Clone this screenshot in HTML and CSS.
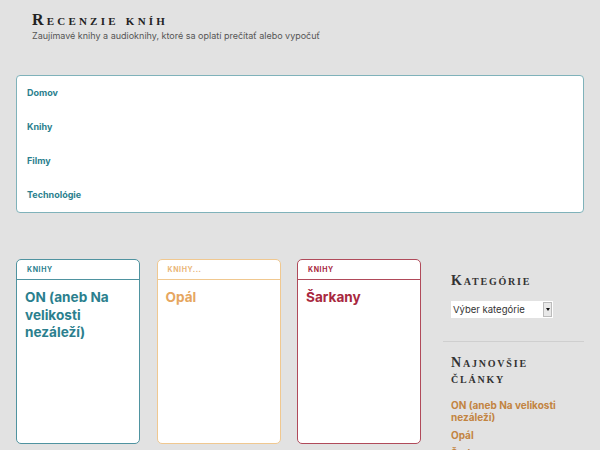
FILE: index.html
```html
<!DOCTYPE html>
<html lang="sk">
<head>
<meta charset="utf-8">
<title>Recenzie kníh</title>
<link rel="stylesheet" href="styles.css">
</head>
<body>
<header class="site-header">
  <h1 class="site-title">Recenzie kníh</h1>
  <p class="site-desc">Zaujímavé knihy a audioknihy, ktoré sa oplatí prečítať alebo vypočuť</p>
</header>
<nav class="menu">
  <a class="menu-item" href="#">Domov</a>
  <a class="menu-item" href="#">Knihy</a>
  <a class="menu-item" href="#">Filmy</a>
  <a class="menu-item" href="#">Technológie</a>
</nav>
<div class="content">
  <main class="cards">
    <article class="card card-teal">
      <div class="card-cat">Knihy</div>
      <h2 class="card-title">ON (aneb Na velikosti nezáleží)</h2>
    </article>
    <article class="card card-orange">
      <div class="card-cat">Knihy...</div>
      <h2 class="card-title">Opál</h2>
    </article>
    <article class="card card-red">
      <div class="card-cat">Knihy</div>
      <h2 class="card-title">Šarkany</h2>
    </article>
  </main>
  <aside class="sidebar">
    <section class="widget widget-cat">
      <h3 class="widget-title">Kategórie</h3>
      <div class="select"><span class="select-text">Výber kategórie</span><span class="select-btn"><span class="arrow"></span></span></div>
    </section>
    <section class="widget widget-recent">
      <h3 class="widget-title">Najnovšie články</h3>
      <ul class="recent">
        <li><a href="#">ON (aneb Na velikosti nezáleží)</a></li>
        <li><a href="#">Opál</a></li>
        <li><a href="#">Šarkany</a></li>
      </ul>
    </section>
  </aside>
</div>
</body>
</html>
```
FILE: styles.css
```css
html, body {
  margin: 0;
  padding: 0;
}
body {
  background: #e2e2e2;
  font-family: Inter, "Open Sans", "Liberation Sans", sans-serif;
  color: #333;
  width: 600px;
  height: 450px;
  overflow: hidden;
}
a { text-decoration: none; }

.site-header {
  padding: 11px 32px 0;
  height: 64px;
  box-sizing: border-box;
}
.site-title {
  margin: 0;
  font-family: "Liberation Serif", "DejaVu Serif", serif;
  font-variant: small-caps;
  font-weight: bold;
  font-size: 16px;
  line-height: 18px;
  letter-spacing: 3.2px;
  color: #222;
}
.site-desc {
  margin: 1px 0 0;
  font-size: 9px;
  line-height: 12px;
  color: #555;
}

.menu {
  margin: 11px 16px 0;
  background: #fff;
  border: 1px solid #7fb2ba;
  border-radius: 4px;
  display: flex;
  flex-direction: column;
  height: 136px;
}
.menu-item {
  height: 34px;
  line-height: 34px;
  padding-left: 10px;
  font-size: 9px;
  font-weight: 700;
  color: #2b7f8e;
}

.content {
  display: flex;
  margin: 46px 16px 0;
  gap: 22px;
}
.cards {
  display: flex;
  gap: 16.5px;
}
.card {
  width: 124px;
  height: 185px;
  box-sizing: border-box;
  background: #fff;
  border: 1px solid;
  border-radius: 5px;
  flex: none;
}
.card-cat {
  height: 19px;
  line-height: 19px;
  padding-left: 10px;
  font-size: 7px;
  font-weight: 700;
  letter-spacing: 0.6px;
  text-transform: uppercase;
  border-bottom: 1px solid;
}
.card-title {
  margin: 9px 0 0;
  padding: 0 8px;
  font-size: 13.6px;
  line-height: 17.5px;
  font-weight: 700;
}
.card-teal { border-color: #4f93a0; }
.card-teal .card-cat { color: #2b7f8e; border-color: #4f93a0; }
.card-teal .card-title { color: #2b7f8e; }
.card-orange { border-color: #f0c890; }
.card-orange .card-cat { color: #eab677; border-color: #f0c890; }
.card-orange .card-title { color: #e6a660; }
.card-red { border-color: #b04a5a; }
.card-red .card-cat { color: #a8283e; border-color: #b04a5a; }
.card-red .card-title { color: #a8283e; }

.sidebar {
  width: 141px;
  flex: none;
}
.widget {
  padding: 0 8px;
}
.widget-title {
  margin: 0;
  font-family: "Liberation Serif", "DejaVu Serif", serif;
  font-variant: small-caps;
  font-weight: bold;
  font-size: 14px;
  line-height: 16px;
  letter-spacing: 1.8px;
  color: #333;
}
.widget-cat {
  padding-top: 14px;
  padding-bottom: 23px;
  border-bottom: 1px solid #cfcfcf;
}
.select {
  margin-top: 12px;
  width: 102px;
  height: 17px;
  background: #fff;
  display: flex;
  align-items: center;
  box-sizing: border-box;
}
.select-text {
  flex: 1;
  padding-left: 2px;
  font-size: 9.5px;
  color: #333;
}
.select-btn {
  width: 9px;
  height: 15px;
  margin-right: 1px;
  background: #e8e8e8;
  border: 1px solid #bbb;
  box-sizing: border-box;
  display: flex;
  align-items: center;
  justify-content: center;
}
.arrow {
  width: 0;
  height: 0;
  border-left: 2.5px solid transparent;
  border-right: 2.5px solid transparent;
  border-top: 3px solid #111;
}
.widget-recent {
  padding-top: 13px;
}
.recent {
  list-style: none;
  margin: 12px 0 0;
  padding: 0;
}
.recent li {
  margin-bottom: 6px;
  font-size: 10px;
  line-height: 12px;
}
.recent a {
  font-weight: 700;
  color: #c28441;
}
```
